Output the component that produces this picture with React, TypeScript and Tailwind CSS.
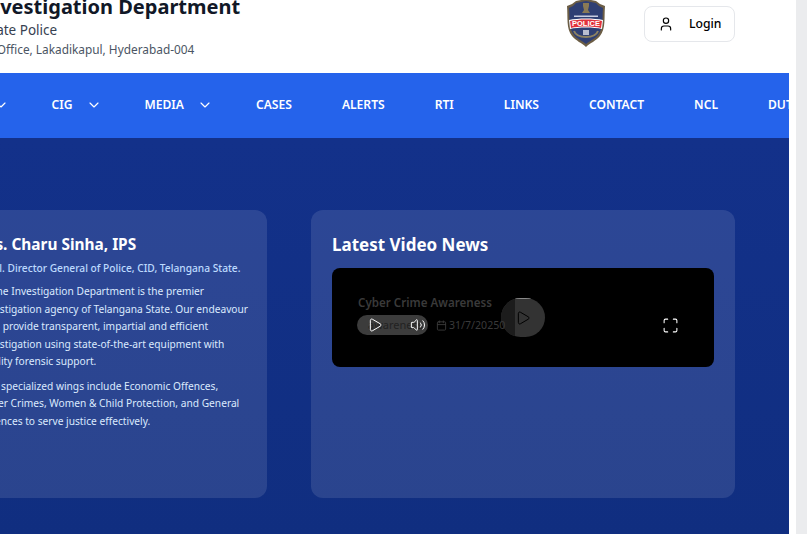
import React from 'react';
import { Calendar, ChevronDown, Maximize, Play, User, Volume2 } from 'lucide-react';

type NavItem = { label: string; menu?: boolean };

const navItems: NavItem[] = [
  { label: 'ABOUT', menu: true },
  { label: 'CIG', menu: true },
  { label: 'MEDIA', menu: true },
  { label: 'CASES' },
  { label: 'ALERTS' },
  { label: 'RTI' },
  { label: 'LINKS' },
  { label: 'CONTACT' },
  { label: 'NCL' },
  { label: 'DUTY' },
];

const PoliceBadge = () => (
  <svg viewBox="0 0 40 48" className="w-[40px] h-[48px]">
    <path d="M10 1 L20 -1 L30 1 L34 4 L39 6 C38 18 40 28 34 36 C30 41 24 43 20 47 C16 43 10 41 6 36 C0 28 2 18 1 6 L6 4 Z" fill="#6b5d45" />
    <path d="M10 3 L20 1 L30 3 L33 6 L37 8 C36 18 38 27 32 35 C29 39 23 41 20 44 C17 41 11 39 8 35 C2 27 4 18 3 8 L7 6 Z" fill="#2f3f73" />
    <path d="M17 3 h6 v3 l-1 4 l2 3 h-8 l2 -3 l-1 -4 Z" fill="#8a7a55" />
    <rect x="8" y="15.5" width="24" height="1.5" fill="#c9cde0" />
    <path d="M3 20 C12 18 28 18 37 20 L36 29 C28 27 12 27 4 29 Z" fill="#ffffff" />
    <path d="M4 21 C12 19 28 19 36 21 L35 28 C28 26 12 26 5 28 Z" fill="#e1313c" />
    <text x="20" y="26" textAnchor="middle" fontSize="7.5" fontWeight="700" fill="#ffffff" style={{ fontFamily: '"Liberation Sans", sans-serif' }}>POLICE</text>
    <path d="M8 31 C11 39 29 39 32 31" fill="none" stroke="#8d8262" strokeWidth="2" />
    <rect x="17" y="30" width="6" height="5" fill="#b9bdd0" />
  </svg>
);

const App: React.FC = () => {
  return (
    <div className="flex h-[534px] w-[807px] overflow-hidden bg-white font-['Noto_Sans',sans-serif]">
      <div className="w-[789px] flex-none overflow-hidden">
        <div className="-ml-[100px] -mt-[10px] w-[889px]">
          <header className="flex h-[83px] items-start justify-between bg-white pr-[54px] pt-[3px]">
            <div className="ml-[15px]">
              <h1 className="text-[20px] font-bold leading-[28px] text-[#111827]">Crime Investigation Department</h1>
              <p className="text-[13.5px] leading-[19px] text-[#374151]">Telangana State Police</p>
              <p className="text-[11.85px] leading-[18px] text-[#4b5563]">CID Head Qrs. Office, Lakadikapul, Hyderabad-004</p>
            </div>
            <div className="flex items-start gap-[38px]">
              <div className="pt-[7px]">
                <PoliceBadge />
              </div>
              <button className="mt-[13px] flex h-[36px] w-[91px] items-center rounded-lg border border-gray-200 bg-white pl-[13px] text-[12.2px] font-medium text-black">
                <User size={16} strokeWidth={1.75} className="mr-[15px]" />
                Login
              </button>
            </div>
          </header>

          <nav className="flex h-[65px] items-center overflow-hidden bg-[#2563eb] pl-[13px]">
            {navItems.map((item) => (
              <a
                key={item.label}
                className={`flex flex-none items-center text-[12.1px] font-semibold text-white ${item.menu ? 'pl-[25px] pr-[18px]' : 'px-[25px]'}`}
              >
                {item.label}
                {item.menu && <ChevronDown size={16} strokeWidth={1.75} className="ml-[13px]" />}
              </a>
            ))}
          </nav>

          <main className="flex h-[396px] items-start gap-[44px] bg-linear-to-b from-[#13318a] to-[#102e80] pl-[59px] pt-[72px]">
            <section className="h-[288px] w-[308px] flex-none rounded-xl bg-white/11 px-[21px] pt-[24px]">
              <h2 className="-ml-[6px] text-[15.4px] font-bold leading-[22px] text-white">Mrs. Charu Sinha, IPS</h2>
              <p className="mt-[4px] whitespace-nowrap text-[10.2px] font-medium leading-[16px] text-blue-200">Addl. Director General of Police, CID, Telangana State.</p>
              <p className="mt-[7px] whitespace-nowrap text-[10.2px] leading-[17.5px] text-blue-100">
                Crime Investigation Department is the premier<br />
                investigation agency of Telangana State. Our endeavour<br />
                is to provide transparent, impartial and efficient<br />
                investigation using state-of-the-art equipment with<br />
                quality forensic support.
              </p>
              <p className="mt-[7px] whitespace-nowrap text-[10.2px] leading-[17.5px] text-blue-100">
                Our specialized wings include Economic Offences,<br />
                Cyber Crimes, Women &amp; Child Protection, and General<br />
                Offences to serve justice effectively.
              </p>
            </section>

            <section className="h-[288px] w-[424px] flex-none rounded-xl bg-white/11 px-[21px] pt-[22px]">
              <h2 className="text-[17px] font-bold leading-[26px] text-white">Latest Video News</h2>
              <div className="relative mt-[10px] h-[99px] w-[382px] overflow-hidden rounded-lg bg-black">
                <p className="absolute left-[26px] top-[26px] text-[11.6px] font-semibold leading-[17px] text-[#3a3a3a]">Cyber Crime Awareness</p>
                <div className="absolute left-[25px] top-[47px] flex h-[20px] w-[71px] items-center justify-between rounded-full bg-[#3c3c3c] px-[10px]">
                  <span className="absolute left-[11px] text-[11px] text-[#222222]">awareness</span>
                  <Play size={16} strokeWidth={1.5} className="relative text-white" />
                  <Volume2 size={16} strokeWidth={1.5} className="relative -mr-[8px] text-white" />
                </div>
                <div className="absolute left-[169px] top-[30px] flex h-[39px] w-[44px] items-center justify-center overflow-hidden rounded-full bg-[#333333]">
                  <div className="absolute inset-y-0 left-0 w-[14px] bg-[#1c1c1c]" />
                  <div className="absolute left-[14px] top-0 h-px w-[16px] bg-[#8a8a8a]" />
                  <Play size={16} strokeWidth={1.5} className="relative text-black" />
                </div>
                <div className="absolute left-[104px] top-[50px] flex items-center gap-[2px] text-[10.6px] leading-[14px] text-[#3a3a3a]">
                  <Calendar size={11} />
                  31/7/20250
                </div>
                <Maximize size={17} strokeWidth={1.5} className="absolute left-[330px] top-[49px] text-white" />
              </div>
            </section>
          </main>
        </div>
      </div>
      <div className="w-[7px] flex-none bg-white" />
      <div className="w-[11px] flex-none bg-[#ebecee]" />
    </div>
  );
};

export default App;
